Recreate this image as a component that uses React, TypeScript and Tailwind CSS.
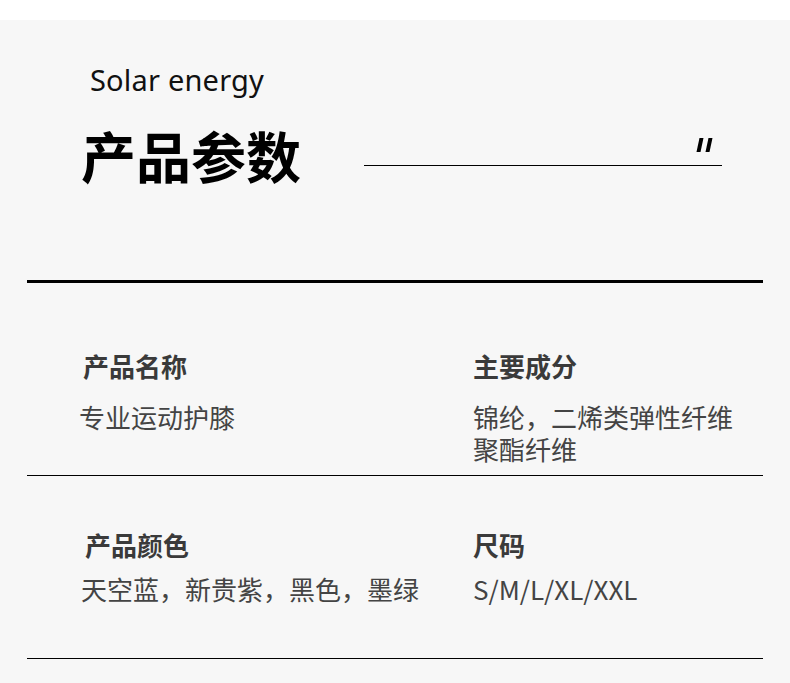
const rows = [
  {
    left: { label: "产品名称", value: "专业运动护膝" },
    right: { label: "主要成分", value: "锦纶，二烯类弹性纤维\n聚酯纤维" },
    pad: "pt-[67px] pb-[10px]",
    gap: "mt-[19px]",
    lx: "pl-[56px]",
  },
  {
    left: { label: "产品颜色", value: "天空蓝，新贵紫，黑色，墨绿" },
    right: { label: "尺码", value: "S/M/L/XL/XXL" },
    pad: "pt-[53px] pb-[53px]",
    gap: "mt-[12px]",
    lx: "pl-[58px]",
  },
];

export default function App() {
  return (
    <div
      className="w-[790px] h-[683px] bg-white overflow-hidden"
      style={{ fontFamily: '"Noto Sans", "Noto Sans CJK SC", sans-serif' }}
    >
      <div className="mt-5 h-[663px] bg-[#f7f7f7]">
        <div className="pl-[90px] pt-[40px] text-[29px] leading-[40px] text-[#111] tracking-[0.2px]">
          Solar energy
        </div>
        <div className="flex items-end pl-[81px] mt-[22px]">
          <div
            className="text-[55px] leading-[64px] font-bold text-black"
            style={{ fontFamily: '"Noto Sans CJK SC", sans-serif' }}
          >
            产品参数
          </div>
          <div className="ml-[63px] w-[358px] mb-[20px] relative border-b border-black">
            <span className="absolute right-[11px] bottom-[13px] flex gap-[5px]">
              <span className="block w-[4px] h-[14px] bg-black skew-x-[-12deg]"></span>
              <span className="block w-[4px] h-[14px] bg-black skew-x-[-12deg]"></span>
            </span>
          </div>
        </div>
        <div className="mx-[27px] mt-[94px] border-t-[3px] border-black">
          {rows.map((row, i) => (
            <div
              key={i}
              className={`flex border-b border-black ${row.pad}`}
              style={{ fontFamily: '"Noto Sans CJK SC", sans-serif' }}
            >
              {[row.left, row.right].map((col, j) => (
                <div
                  key={j}
                  className={j === 0 ? `w-[446px] ${row.lx}` : "flex-1"}
                >
                  <div className="text-[26px] leading-[32px] font-bold text-[#3a3a3a]">
                    {col.label}
                  </div>
                  <div
                    className={`${row.gap} text-[26px] leading-[32px] text-[#444] whitespace-pre-line ${
                      j === 0 ? "-ml-[4px]" : ""
                    }`}
                  >
                    {col.value}
                  </div>
                </div>
              ))}
            </div>
          ))}
        </div>
      </div>
    </div>
  );
}
